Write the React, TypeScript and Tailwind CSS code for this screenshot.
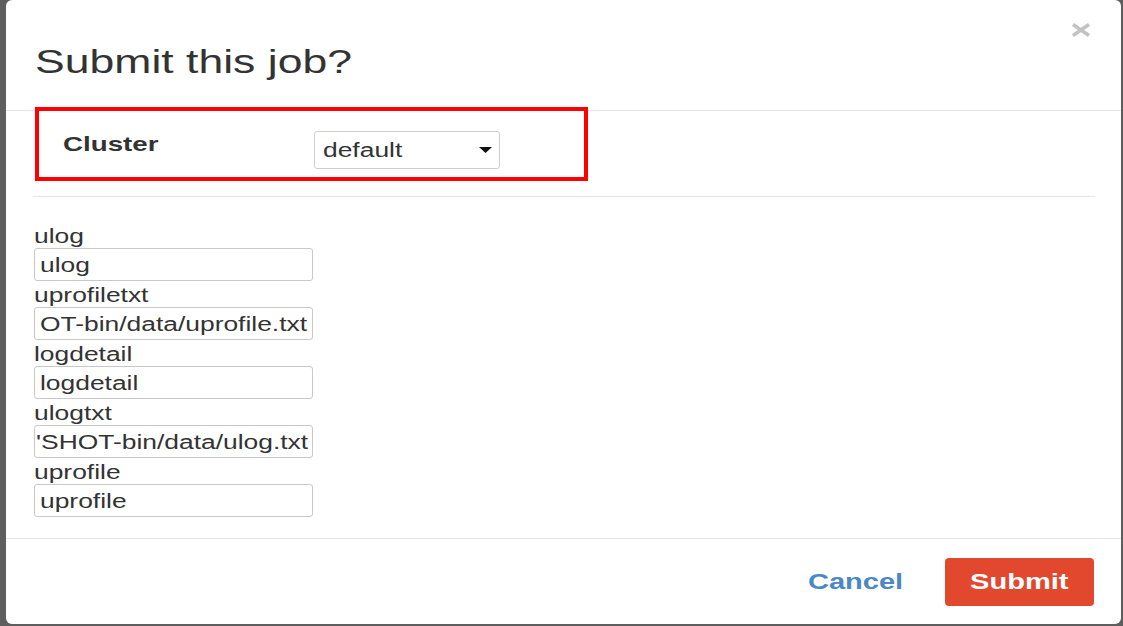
import type { ReactNode } from 'react';

const FIELDS: { label: string; value: string; tail?: boolean }[] = [
  { label: 'ulog', value: 'ulog' },
  { label: 'uprofiletxt', value: 'OT-bin/data/uprofile.txt' },
  { label: 'logdetail', value: 'logdetail' },
  { label: 'ulogtxt', value: "'SHOT-bin/data/ulog.txt", tail: true },
  { label: 'uprofile', value: 'uprofile' },
];

/** The capture is stretched sideways, so text is widened to match. */
function Wide({ children, className = '' }: { children: ReactNode; className?: string }) {
  return <span className={`inline-block whitespace-nowrap scale-x-[1.32] ${className}`}>{children}</span>;
}

function CloseIcon() {
  return (
    <svg width="20" height="14" viewBox="0 0 20 14" aria-hidden>
      <path d="M2 1.5 L18 12.5 M18 1.5 L2 12.5" stroke="#c2c2c2" strokeWidth="3.6" />
    </svg>
  );
}

function Field({ label, value, tail }: { label: string; value: string; tail?: boolean }) {
  return (
    <div className="flex flex-col">
      <div className="h-[24px] text-[20px] leading-[24px] text-[#333]">
        <Wide className="origin-left">{label}</Wide>
      </div>
      <div className="flex h-[33px] w-[279px] items-center overflow-hidden rounded-[3px] border border-[#c9c9c9] bg-white px-[5px] text-[20px] leading-none text-[#333]">
        {/* scrolled-to-end value: the leading fragment sits against the border */}
        <Wide className={tail ? '-ml-[4px] origin-left' : 'origin-left'}>{value}</Wide>
      </div>
    </div>
  );
}

export default function App() {
  return (
    <div className="h-[626px] w-[1123px] overflow-hidden bg-[#5e5e5e] font-['Liberation_Sans',Arial,sans-serif]">
      <div className="relative ml-[6px] flex h-[624px] w-[1115px] flex-col rounded-[6px] bg-white">
        {/* header */}
        <div className="flex h-[111px] items-start justify-between border-b border-[#e5e5e5] pl-[29px] pr-[30px] pt-[45px]">
          <h1 className="text-[33px] leading-none text-[#333]">
            <Wide className="origin-left scale-x-[1.35]">Submit this job?</Wide>
          </h1>
          <button type="button" className="-mt-[22px] cursor-pointer">
            <CloseIcon />
          </button>
        </div>

        {/* cluster */}
        <div className="flex items-start pt-[20px]">
          <div className="mt-[2px] w-[308px] pl-[57px] text-[21px] font-bold leading-none text-[#333]">
            <Wide className="origin-left">Cluster</Wide>
          </div>
          <div className="flex h-[38px] w-[186px] items-center justify-between rounded-[3px] border border-[#cfcfcf] bg-white pl-[8px] pr-[7px] text-[20px] leading-none text-[#333]">
            <Wide className="origin-left">default</Wide>
            <svg width="13" height="6" viewBox="0 0 13 6" aria-hidden>
              <polygon points="0,0 13,0 6.5,6" fill="#111" />
            </svg>
          </div>
        </div>
        <div className="ml-[27px] mr-[26px] mt-[27px] border-t border-[#e5e5e5]" />

        {/* params */}
        <div className="mt-[27px] flex flex-col gap-[2px] pl-[28px]">
          {FIELDS.map((f) => (
            <Field key={f.label} {...f} />
          ))}
        </div>

        {/* footer */}
        <div className="mt-[21px] flex h-[86px] items-center justify-end border-t border-[#e5e5e5] pr-[27px]">
          <button type="button" className="mr-[42px] cursor-pointer text-[22px] font-bold leading-none text-[#4a88c8]">
            <Wide className="origin-right">Cancel</Wide>
          </button>
          <button
            type="button"
            className="flex h-[48px] w-[149px] cursor-pointer items-center justify-center rounded-[4px] bg-[#e2482e] text-[22px] font-bold leading-none text-white"
          >
            <Wide className="origin-center">Submit</Wide>
          </button>
        </div>

        {/* annotation */}
        <div className="pointer-events-none absolute left-[29px] top-[107px] h-[74px] w-[553px] border-4 border-[#ff0000]" />
      </div>
    </div>
  );
}
